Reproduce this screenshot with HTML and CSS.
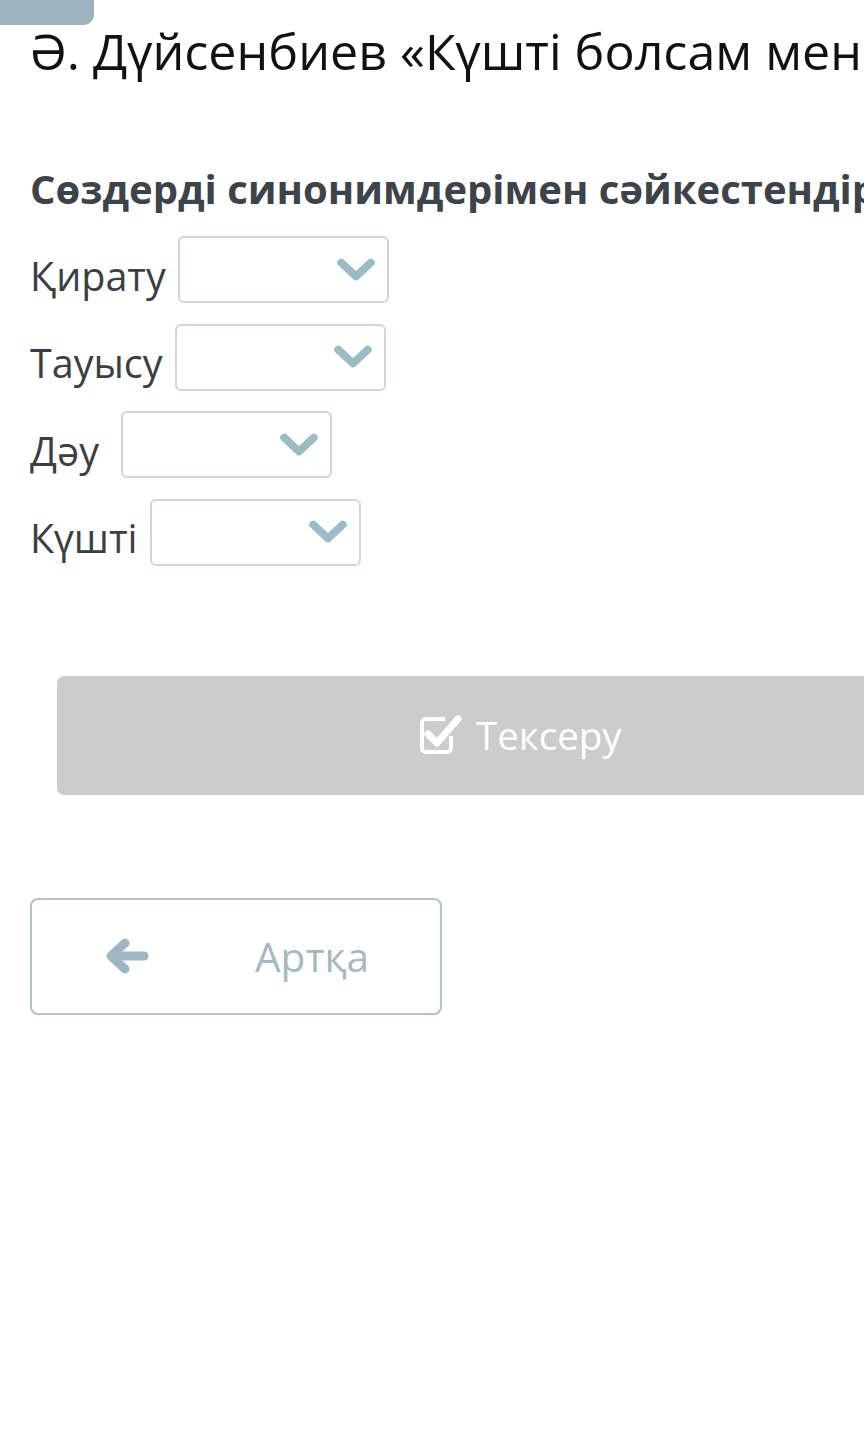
FILE: index.html
```html
<!DOCTYPE html>
<html lang="kk">
<head>
<meta charset="utf-8">
<link rel="stylesheet" href="styles.css">
</head>
<body>
<div class="page">
  <div class="tab"></div>
  <h1 class="title">Ә. Дүйсенбиев «Күшті болсам мен де...»</h1>
  <h2 class="task">Сөздерді синонимдерімен сәйкестендір</h2>
  <div class="rows">
    <div class="row"><span class="label">Қирату</span><div class="select"><svg class="chev" viewBox="0 0 36 22"><path d="M4 4 L18 17 L32 4" /></svg></div></div>
    <div class="row"><span class="label">Тауысу</span><div class="select"><svg class="chev" viewBox="0 0 36 22"><path d="M4 4 L18 17 L32 4" /></svg></div></div>
    <div class="row"><span class="label">Дәу&nbsp;</span><div class="select"><svg class="chev" viewBox="0 0 36 22"><path d="M4 4 L18 17 L32 4" /></svg></div></div>
    <div class="row"><span class="label">Күшті</span><div class="select"><svg class="chev" viewBox="0 0 36 22"><path d="M4 4 L18 17 L32 4" /></svg></div></div>
  </div>
  <div class="check">
    <svg class="check-icon" viewBox="0 0 46 44"><path class="box" d="M33 23 V35 a4 4 0 0 1 -4 4 H8 a4 4 0 0 1 -4 -4 V10 a4 4 0 0 1 4 -4 H27" /><path class="tick" d="M10 21 L19 30 L40 6" /></svg>
    <span>Тексеру</span>
  </div>
  <div class="back">
    <svg class="arrow" viewBox="0 0 44 38"><path d="M20 6 L6 19 L20 32" /><path d="M8 19 L39 19" /></svg>
    <span class="back-text">Артқа</span>
  </div>
</div>
</body>
</html>
```
FILE: styles.css
```css
html, body {
  margin: 0;
  padding: 0;
  background: #ffffff;
  overflow: hidden;
}
body {
  font-family: "Open Sans", "Noto Sans", sans-serif;
  width: 864px;
  height: 1448px;
}
.page {
  position: relative;
  width: 864px;
  height: 1448px;
  overflow: hidden;
}
.tab {
  position: absolute;
  left: 0;
  top: 0;
  width: 94px;
  height: 25px;
  background: #9fb3bf;
  border-bottom-right-radius: 10px;
}
.title {
  margin: 0;
  padding: 18px 0 0 30px;
  font-weight: 400;
  font-size: 50.2px;
  line-height: 66px;
  color: #111111;
  white-space: nowrap;
}
.task {
  margin: 0;
  padding: 80px 0 0 30px;
  font-weight: 700;
  font-size: 40px;
  line-height: 50px;
  color: #3d434a;
  white-space: nowrap;
}
.rows {
  display: flex;
  flex-direction: column;
  gap: 20.5px;
  padding: 22px 0 0 30px;
}
.row {
  display: flex;
  align-items: center;
  gap: 12px;
  height: 67px;
}
.label {
  font-size: 39.5px;
  color: #3a3f44;
  line-height: 52px;
  padding-top: 12px;
  white-space: pre;
}
.select {
  box-sizing: border-box;
  width: 211px;
  height: 67px;
  border: 2px solid #ccd7da;
  border-radius: 6px;
  display: flex;
  align-items: center;
  justify-content: flex-end;
  padding-right: 12px;
}
.chev {
  width: 38px;
  height: 24px;
  fill: none;
  stroke: #9bbcc4;
  stroke-width: 7.5;
  stroke-linecap: round;
  stroke-linejoin: round;
}
.check {
  margin: 110px 0 0 57px;
  width: 840px;
  height: 119px;
  background: #cccccc;
  border-radius: 7px;
  display: flex;
  align-items: center;
  padding-left: 361px;
  box-sizing: border-box;
  gap: 12px;
  color: #ffffff;
  font-size: 38.5px;
}
.check-icon {
  width: 46px;
  height: 44px;
  fill: none;
  stroke: #ffffff;
}
.check-icon .box {
  stroke-width: 4;
}
.check-icon .tick {
  stroke-width: 7;
  stroke-linecap: round;
  stroke-linejoin: round;
}
.back {
  margin: 103px 0 0 30px;
  box-sizing: border-box;
  width: 412px;
  height: 117px;
  border: 2px solid #b3c2c6;
  border-radius: 8px;
  display: flex;
  align-items: center;
  padding-left: 73px;
}
.arrow {
  width: 44px;
  height: 38px;
  fill: none;
  stroke: #9fb6c3;
  stroke-width: 9;
  stroke-linecap: round;
  stroke-linejoin: round;
}
.back-text {
  margin-left: 106px;
  font-size: 40.5px;
  color: #a6b9c3;
}
```
